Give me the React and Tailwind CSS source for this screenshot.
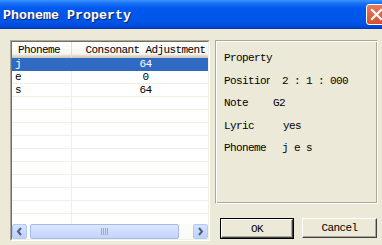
export default function App() {
  const rows = [
    ["j", "64", true],
    ["e", "0", false],
    ["s", "64", false],
  ];
  const empty = Array.from({ length: 11 });
  const mono = { fontFamily: '"Liberation Mono", "DejaVu Sans Mono", monospace' };
  return (
    <div
      className="w-[382px] h-[245px] bg-[#ECE9D8] overflow-hidden flex flex-col text-[11px] tracking-[-0.6px] text-black"
      style={mono}
    >
      {/* Title bar */}
      <div className="h-[29px] shrink-0 flex items-center justify-between pl-[3px] bg-[linear-gradient(to_bottom,#3D95FF_0px,#1C74F8_3px,#0058EE_8px,#0055E5_22px,#0048D8_27px,#0036B0_29px)]">
        <span className="text-white font-bold text-[13.33px] tracking-[0px] [text-shadow:1px_1px_#0A246A] mt-[3px]">
          Phoneme Property
        </span>
        <div className="w-[21px] h-[21px] mr-[-5px] rounded-[3px] border border-white bg-[linear-gradient(to_bottom,#E87A5B,#D6512B)] flex items-center justify-center">
          <svg width="13" height="13" viewBox="0 0 13 13">
            <path d="M2 2 L11 11 M11 2 L2 11" stroke="white" strokeWidth="2.2" strokeLinecap="square" />
          </svg>
        </div>
      </div>

      {/* Body */}
      <div className="flex pl-[10px] pt-[11px] gap-[5px]">
        {/* List view */}
        <div className="w-[200px] h-[201px] border border-t-[#ACA899] border-l-[#ACA899] border-r-white border-b-white">
          <div className="w-full h-full border border-t-[#716F64] border-l-[#716F64] border-r-[#F1EFE2] border-b-[#F1EFE2] bg-white flex flex-col overflow-hidden">
            {/* header */}
            <div className="h-[16px] shrink-0 flex bg-[linear-gradient(to_bottom,#FFFFFF_0%,#F7F6F0_75%,#E2DECD_85%,#D6D2C2_92%,#CBC7B8_100%)]">
              <div className="w-[60px] shrink-0 flex items-center pl-[6px] border-r border-[#E2DECD]">Phoneme</div>
              <div className="w-[147px] shrink-0 flex items-center justify-center">Consonant Adjustment</div>
            </div>
            {/* rows */}
            <div className="flex-1 overflow-hidden">
              {rows.map(([p, v, sel]) => (
                <div
                  key={p}
                  className={
                    "h-[13px] flex border-b " +
                    (sel ? "bg-[#316AC5] text-white border-[#316AC5]" : "border-[#F1EFE2]")
                  }
                >
                  <div className={"w-[60px] shrink-0 flex items-center pl-[3px] leading-none " + (sel ? "" : "border-r border-[#F1EFE2]")}>
                    {p}
                  </div>
                  <div className="w-[147px] shrink-0 flex items-center justify-center leading-none">{v}</div>
                </div>
              ))}
              {empty.map((_, i) => (
                <div key={i} className="h-[13px] flex border-b border-[#F1EFE2]">
                  <div className="w-[60px] shrink-0 border-r border-[#F1EFE2]" />
                  <div className="w-[147px] shrink-0" />
                </div>
              ))}
            </div>
            {/* horizontal scrollbar */}
            <div className="h-[15px] shrink-0 flex items-stretch bg-[#FBFBF8] gap-[2px]">
              <div className="w-[15px] shrink-0 rounded-[2px] border border-[#B4C8F6] bg-[linear-gradient(to_bottom,#D7E3FD,#BFD0FA)] flex items-center justify-center">
                <svg width="7" height="9" viewBox="0 0 7 9">
                  <path d="M5 1 L2 4.5 L5 8" stroke="#4D6185" strokeWidth="2" fill="none" />
                </svg>
              </div>
              <div className="w-[149px] shrink-0 ml-[1px] rounded-[2px] border border-[#A5BAEB] bg-[linear-gradient(to_bottom,#DCE6FD,#C3D3FB)] flex items-center justify-center gap-[1px]">
                <span className="w-[1px] h-[7px] bg-[#8FA8E8]" />
                <span className="w-[1px] h-[7px] bg-[#8FA8E8]" />
                <span className="w-[1px] h-[7px] bg-[#8FA8E8]" />
                <span className="w-[1px] h-[7px] bg-[#8FA8E8]" />
              </div>
              <div className="flex-1" />
              <div className="w-[15px] shrink-0 rounded-[2px] border border-[#B4C8F6] bg-[linear-gradient(to_bottom,#D7E3FD,#BFD0FA)] flex items-center justify-center">
                <svg width="7" height="9" viewBox="0 0 7 9">
                  <path d="M2 1 L5 4.5 L2 8" stroke="#4D6185" strokeWidth="2" fill="none" />
                </svg>
              </div>
            </div>
          </div>
        </div>

        {/* Right column */}
        <div className="w-[163px] flex flex-col">
          <div className="h-[164px] border border-t-[#ACA899] border-l-[#ACA899] border-r-white border-b-white shadow-[inset_1px_1px_white,inset_-1px_-1px_#ACA899] pl-[8px] pt-[6px] flex flex-col">
            <div className="h-[22.5px] flex items-center">Property</div>
            <div className="h-[22.5px] flex items-center">
              <span className="w-[46px] overflow-hidden whitespace-nowrap">Position</span>
              <span className="ml-[12px]">2 : 1 : 000</span>
            </div>
            <div className="h-[22.5px] flex items-center">
              <span className="w-[46px]">Note</span>
              <span className="ml-[3px]">G2</span>
            </div>
            <div className="h-[22.5px] flex items-center">
              <span className="w-[46px]">Lyric</span>
              <span className="ml-[13px]">yes</span>
            </div>
            <div className="h-[22.5px] flex items-center">
              <span className="w-[46px] whitespace-nowrap">Phoneme</span>
              <span className="ml-[12px]">j e s</span>
            </div>
          </div>
          <div className="flex mt-[14px]">
            <div className="ml-[5px] w-[74px] h-[21px] border border-black">
              <div className="w-full h-full border border-t-white border-l-white border-r-[#404040] border-b-[#404040] shadow-[inset_-1px_-1px_#ACA899] flex items-center justify-center pt-[1px]">
                OK
              </div>
            </div>
            <div className="ml-[8px] w-[75px] h-[20px] border border-t-white border-l-white border-r-[#404040] border-b-[#404040] shadow-[inset_-1px_-1px_#ACA899] flex items-center justify-center pt-[1px]">
              Cancel
            </div>
          </div>
        </div>
      </div>
    </div>
  );
}
